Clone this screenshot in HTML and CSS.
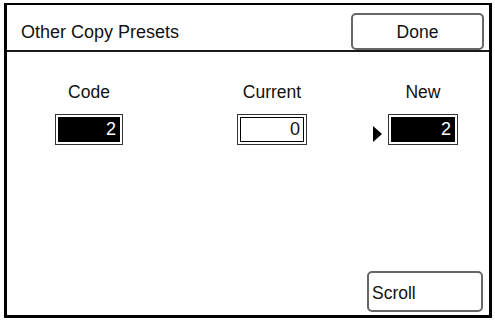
FILE: index.html
```html
<!DOCTYPE html>
<html>
<head>
<meta charset="utf-8">
<link rel="stylesheet" href="styles.css">
</head>
<body>
<div class="frame">
  <div class="header">
    <div class="title">Other Copy Presets</div>
    <div class="btn btn-done">Done</div>
  </div>
  <div class="content">
    <div class="fields">
      <div class="col col-code">
        <div class="label">Code</div>
        <div class="box box-68"><div class="inner dark">2</div></div>
      </div>
      <div class="col col-current">
        <div class="label">Current</div>
        <div class="box box-70"><div class="inner light">0</div></div>
      </div>
      <div class="col col-new">
        <div class="label">New</div>
        <div class="box box-70 pointed"><div class="inner dark">2</div></div>
      </div>
    </div>
    <div class="btn btn-scroll">Scroll</div>
  </div>
</div>
</body>
</html>
```
FILE: styles.css
```css
* { box-sizing: border-box; }
html, body { margin: 0; padding: 0; background: #fff; }
body {
  width: 495px;
  height: 320px;
  font-family: "Liberation Sans", Arial, sans-serif;
  color: #111;
  font-size: 17.5px;
}
.frame {
  margin: 3px 0 0 4px;
  width: 488px;
  height: 315px;
  border: 3px solid #000;
  border-top-width: 2px;
  display: flex;
  flex-direction: column;
}
.header {
  height: 47px;
  border-bottom: 2px solid #1a1a1a;
  padding: 8px 5px 0 14px;
  display: flex;
  align-items: center;
  justify-content: space-between;
}
.title { line-height: 20px; font-size: 18px; }
.btn {
  border: 2px solid #666;
  border-radius: 5px;
  background: #fff;
  line-height: 20px;
}
.btn-done {
  width: 133px;
  height: 37px;
  display: flex;
  align-items: center;
  justify-content: center;
}
.content {
  flex: 1;
  display: flex;
  flex-direction: column;
}
.fields {
  display: flex;
  padding-top: 30px;
}
.col {
  width: 100px;
  display: flex;
  flex-direction: column;
  align-items: center;
}
.col-code { margin-left: 32px; }
.col-current { margin-left: 83px; }
.col-new { margin-left: 51px; }
.label {
  line-height: 20px;
  height: 20px;
}
.box {
  margin-top: 12px;
  height: 31px;
  border: 1px solid #333;
  padding: 2px;
  position: relative;
}
.box-68 { width: 68px; }
.box-70 { width: 70px; }
.inner {
  height: 100%;
  border: 1px solid #000;
  text-align: right;
  padding-right: 3px;
  line-height: 23px;
  font-size: 18px;
}
.dark { background: #000; color: #fff; }
.light { background: #fff; color: #111; }
.pointed::before {
  content: "";
  position: absolute;
  left: -16px;
  top: 11px;
  border-left: 9px solid #000;
  border-top: 8px solid transparent;
  border-bottom: 8px solid transparent;
}
.btn-scroll {
  margin-top: auto;
  align-self: flex-end;
  margin-right: 6px;
  margin-bottom: 3px;
  width: 116px;
  height: 41px;
  display: flex;
  align-items: center;
  padding-left: 3px;
  padding-top: 3px;
}
```
